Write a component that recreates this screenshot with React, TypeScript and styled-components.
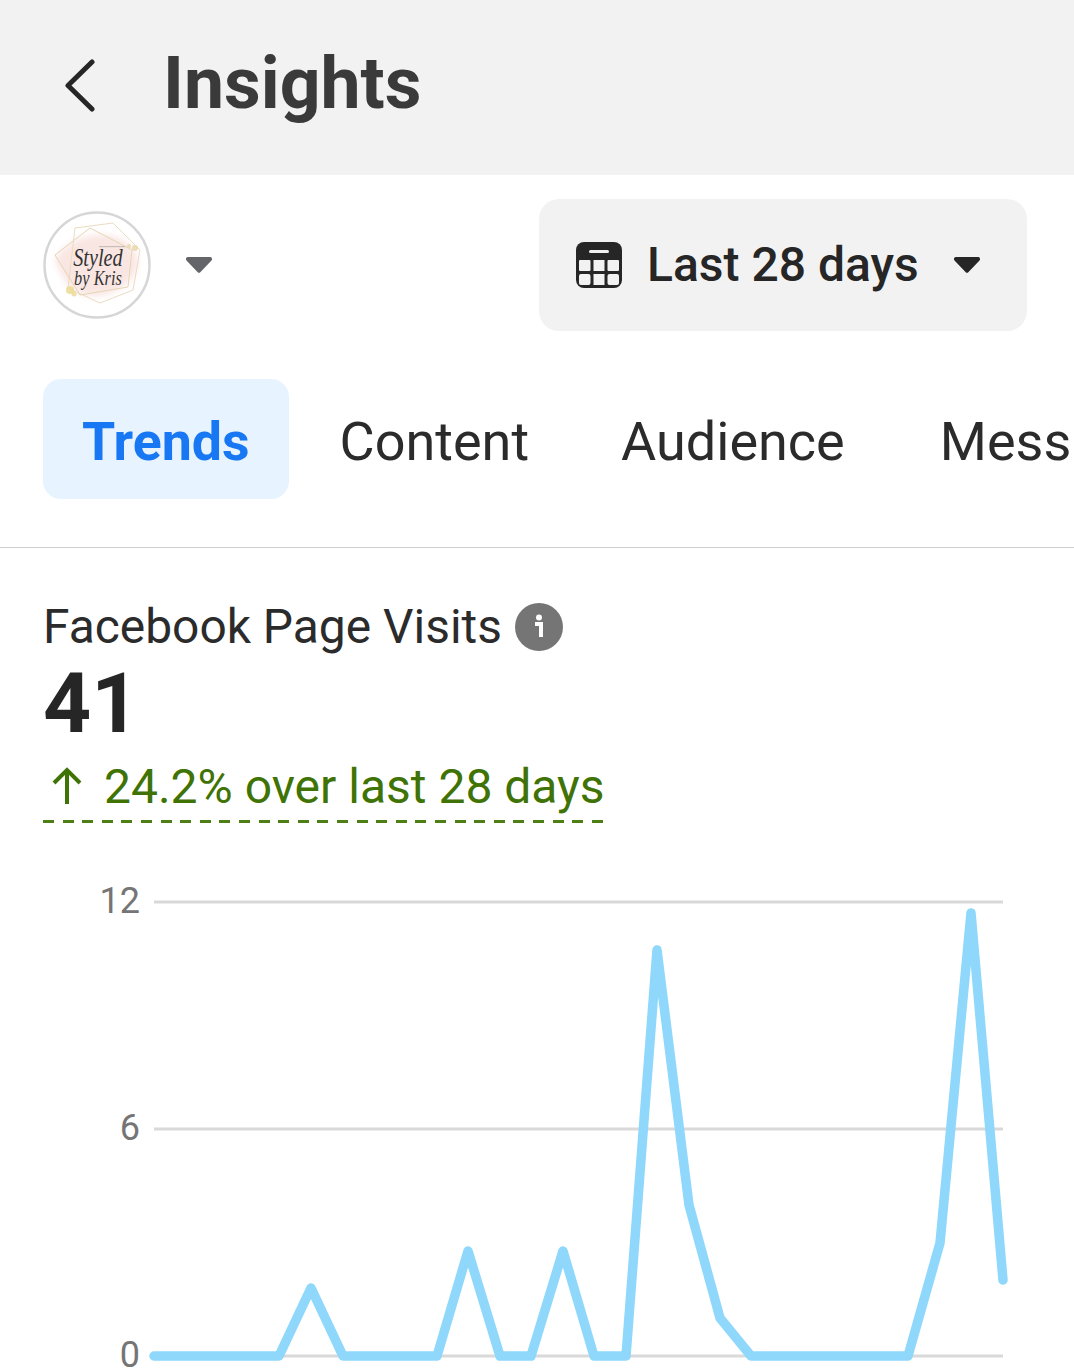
import { createGlobalStyle, styled } from 'styled-components';

const GlobalStyle = createGlobalStyle`
  html, body {
    margin: 0;
    padding: 0;
    background: #fff;
    overflow: hidden;
  }
  * {
    box-sizing: border-box;
  }
`;

const Page = styled.div`
  width: 1074px;
  height: 1372px;
  overflow: hidden;
  font-family: Roboto, 'Liberation Sans', sans-serif;
  color: #262626;
`;

const Header = styled.header`
  height: 175px;
  background: #f2f2f2;
  display: flex;
  align-items: center;
  padding-left: 62px;
  gap: 63px;
`;

const Title = styled.h1`
  margin: 0;
  font-size: 71.5px;
  line-height: 80px;
  font-weight: 700;
  color: #3a3a3a;
  position: relative;
  top: -4px;
`;

const FilterRow = styled.div`
  display: flex;
  align-items: center;
  justify-content: space-between;
  padding: 24px 47px 0 43px;
`;

const PageSwitch = styled.div`
  display: flex;
  align-items: center;
  gap: 34px;
`;

const Avatar = styled.svg`
  width: 108px;
  height: 108px;
  display: block;
`;

const DateButton = styled.div`
  width: 488px;
  height: 132px;
  border-radius: 20px;
  background: #f2f2f2;
  display: flex;
  align-items: center;
  padding: 0 46px 0 37px;
  font-size: 48px;
  font-weight: 500;
  color: #262626;
`;

const DateLabel = styled.span`
  margin-left: 25px;
  flex: 1;
  position: relative;
  top: -1px;
`;

const Tabs = styled.nav`
  display: flex;
  align-items: center;
  margin-top: 48px;
  padding: 0 0 48px 43px;
  border-bottom: 1px solid #cfcfcf;
  overflow: hidden;
`;

const Tab = styled.div<{ $active?: boolean; $gap: number }>`
  flex: none;
  height: 120px;
  display: flex;
  align-items: center;
  justify-content: center;
  padding: 4px ${(p) => (p.$active ? '39px' : '0')} 0;
  margin-right: ${(p) => p.$gap}px;
  border-radius: 18px;
  background: ${(p) => (p.$active ? '#e7f3ff' : 'transparent')};
  color: ${(p) => (p.$active ? '#1877f2' : '#2b2b2b')};
  font-size: ${(p) => (p.$active ? 53.7 : 54)}px;
  font-weight: ${(p) => (p.$active ? 700 : 400)};
`;

const Summary = styled.section`
  padding: 50px 0 0 43px;
`;

const MetricName = styled.div`
  display: flex;
  align-items: center;
  gap: 13px;
  font-size: 47.9px;
  line-height: 58px;
  color: #2b2b2b;
`;

const InfoBadge = styled.span`
  width: 48px;
  height: 48px;
  border-radius: 50%;
  background: #757575;
  display: flex;
  align-items: center;
  justify-content: center;
`;

const MetricValue = styled.div`
  font-size: 84px;
  line-height: 88px;
  font-weight: 700;
  margin-top: 4px;
  color: #262626;
`;

const Change = styled.div`
  width: 563px;
  color: #3f7305;
`;

const ChangeText = styled.div`
  display: flex;
  align-items: center;
  gap: 20px;
  height: 72px;
  padding: 4px 0 0 7px;
  font-size: 48px;
  white-space: nowrap;
`;

const DashedRule = styled.div`
  height: 3px;
  background: repeating-linear-gradient(to right, #4d7f16 0 11px, transparent 11px 19.6px);
`;

const ChartFrame = styled.svg`
  display: block;
  margin-top: 39px;
`;

const Caret = styled.svg`
  display: block;
  flex: none;
`;

const LINE: [number, number][] = [
  [154, 1356], [279, 1356], [311, 1288], [343, 1356], [437, 1356], [468, 1251],
  [500, 1356], [531, 1356], [563, 1251], [594, 1356], [626, 1356], [657, 950],
  [689, 1205], [720, 1318], [751, 1356], [908, 1356], [940, 1243], [971, 913],
  [1003, 1280],
];

// chart svg starts at y=862 in the page
const CHART_TOP = 862;
const GRID = [
  { label: '12', y: 902 },
  { label: '6', y: 1129 },
  { label: '0', y: 1356 },
];

function App() {
  const points = LINE.map(([x, y]) => `${x},${y - CHART_TOP}`).join(' ');

  return (
    <Page>
      <GlobalStyle />
      <Header>
        <svg width="38" height="58" viewBox="0 0 38 58" fill="none">
          <path d="M30 3 L6 26.5 L30 50" stroke="#262626" strokeWidth="5" strokeLinecap="round" strokeLinejoin="round" />
        </svg>
        <Title>Insights</Title>
      </Header>

      <FilterRow>
        <PageSwitch>
          <Avatar viewBox="0 0 108 108">
            <defs>
              <filter id="wash" x="-20%" y="-20%" width="140%" height="140%">
                <feGaussianBlur stdDeviation="3" />
              </filter>
            </defs>
            <circle cx="54" cy="54" r="52.5" fill="#fff" stroke="#d6d6d6" strokeWidth="2.5" />
            <path
              d="M13 46 C24 30 44 22 64 24 C80 26 94 36 95 52 C94 66 80 80 62 84 C46 88 28 82 21 68 C17 60 11 52 13 46 Z"
              fill="#f9e6e3"
              filter="url(#wash)"
            />
            <polygon points="32,17 70,12 97,39 90,79 57,92 25,77" fill="none" stroke="#eadcc2" strokeWidth="1" />
            <polygon points="12,44 47,17 89,39 85,76 37,84" fill="none" stroke="#e6d5b4" strokeWidth="1" />
            <circle cx="27" cy="79" r="4" fill="#ecd98f" opacity="0.85" />
            <circle cx="31" cy="83" r="2.5" fill="#ecd98f" opacity="0.8" />
            <circle cx="92" cy="37" r="3" fill="#e5d6a4" opacity="0.8" />
            <circle cx="86" cy="35" r="2" fill="#e5d6a4" opacity="0.8" />
            <rect x="56" y="35" width="26" height="1.2" fill="#c9bdb8" />
            <text transform="translate(55 55) scale(0.78 1)" textAnchor="middle" fontFamily="'Liberation Serif', serif" fontStyle="italic" fontSize="26" fill="#333">
              Styled
              <tspan x="0" y="19" fontSize="21">by Kris</tspan>
            </text>
          </Avatar>
          <Caret width="28" height="18" viewBox="0 0 28 18">
            <path d="M3 1 H25 A2 2 0 0 1 26.5 4.4 L15.5 16 A2 2 0 0 1 12.5 16 L1.5 4.4 A2 2 0 0 1 3 1 Z" fill="#646569" />
          </Caret>
        </PageSwitch>
        <DateButton>
          <svg width="46" height="46" viewBox="0 0 46 46">
            <rect width="46" height="46" rx="8" fill="#262626" />
            <rect x="13" y="8" width="20" height="3" rx="1.5" fill="#f2f2f2" />
            <rect x="3" y="18" width="11.5" height="11" rx="1" fill="#f2f2f2" />
            <rect x="17.5" y="18" width="11" height="11" fill="#f2f2f2" />
            <rect x="31.5" y="18" width="11.5" height="11" rx="1" fill="#f2f2f2" />
            <rect x="3" y="32" width="11.5" height="11" rx="2" fill="#f2f2f2" />
            <rect x="17.5" y="32" width="11" height="11" fill="#f2f2f2" />
            <rect x="31.5" y="32" width="11.5" height="11" rx="2" fill="#f2f2f2" />
          </svg>
          <DateLabel>Last 28 days</DateLabel>
          <Caret width="28" height="18" viewBox="0 0 28 18">
            <path d="M3 1 H25 A2 2 0 0 1 26.5 4.4 L15.5 16 A2 2 0 0 1 12.5 16 L1.5 4.4 A2 2 0 0 1 3 1 Z" fill="#262626" />
          </Caret>
        </DateButton>
      </FilterRow>

      <Tabs>
        <Tab $active $gap={51}>Trends</Tab>
        <Tab $gap={92}>Content</Tab>
        <Tab $gap={95}>Audience</Tab>
        <Tab $gap={0}>Messages</Tab>
      </Tabs>

      <Summary>
        <MetricName>
          Facebook Page Visits
          <InfoBadge>
            <svg width="12" height="26" viewBox="0 0 12 26">
              <circle cx="6" cy="3.5" r="3" fill="#fff" />
              <path d="M2 10 H8 V23 M3 10 H7" stroke="#fff" strokeWidth="4" fill="none" />
            </svg>
          </InfoBadge>
        </MetricName>
        <MetricValue>41</MetricValue>
        <Change>
          <ChangeText>
            <svg width="34" height="40" viewBox="0 0 34 40" fill="none">
              <path d="M17 38 V4 M4 17 L17 4 L30 17" stroke="#3f7305" strokeWidth="4" />
            </svg>
            24.2% over last 28 days
          </ChangeText>
          <DashedRule />
        </Change>
      </Summary>

      <ChartFrame width="1074" height="510" viewBox="0 0 1074 510">
        {GRID.map((g) => (
          <g key={g.label}>
            <line x1="154" x2="1003" y1={g.y - CHART_TOP} y2={g.y - CHART_TOP} stroke="#d9d9d9" strokeWidth="3" />
            <text
              x="140"
              y={g.y - CHART_TOP + 11}
              textAnchor="end"
              fontFamily="Roboto, sans-serif"
              fontSize="36"
              fill="#757575"
            >
              {g.label}
            </text>
          </g>
        ))}
        <polyline
          points={points}
          fill="none"
          stroke="#8fd8fb"
          strokeWidth="9.5"
          strokeLinecap="round"
          strokeLinejoin="round"
        />
      </ChartFrame>
    </Page>
  );
}

export default App;
